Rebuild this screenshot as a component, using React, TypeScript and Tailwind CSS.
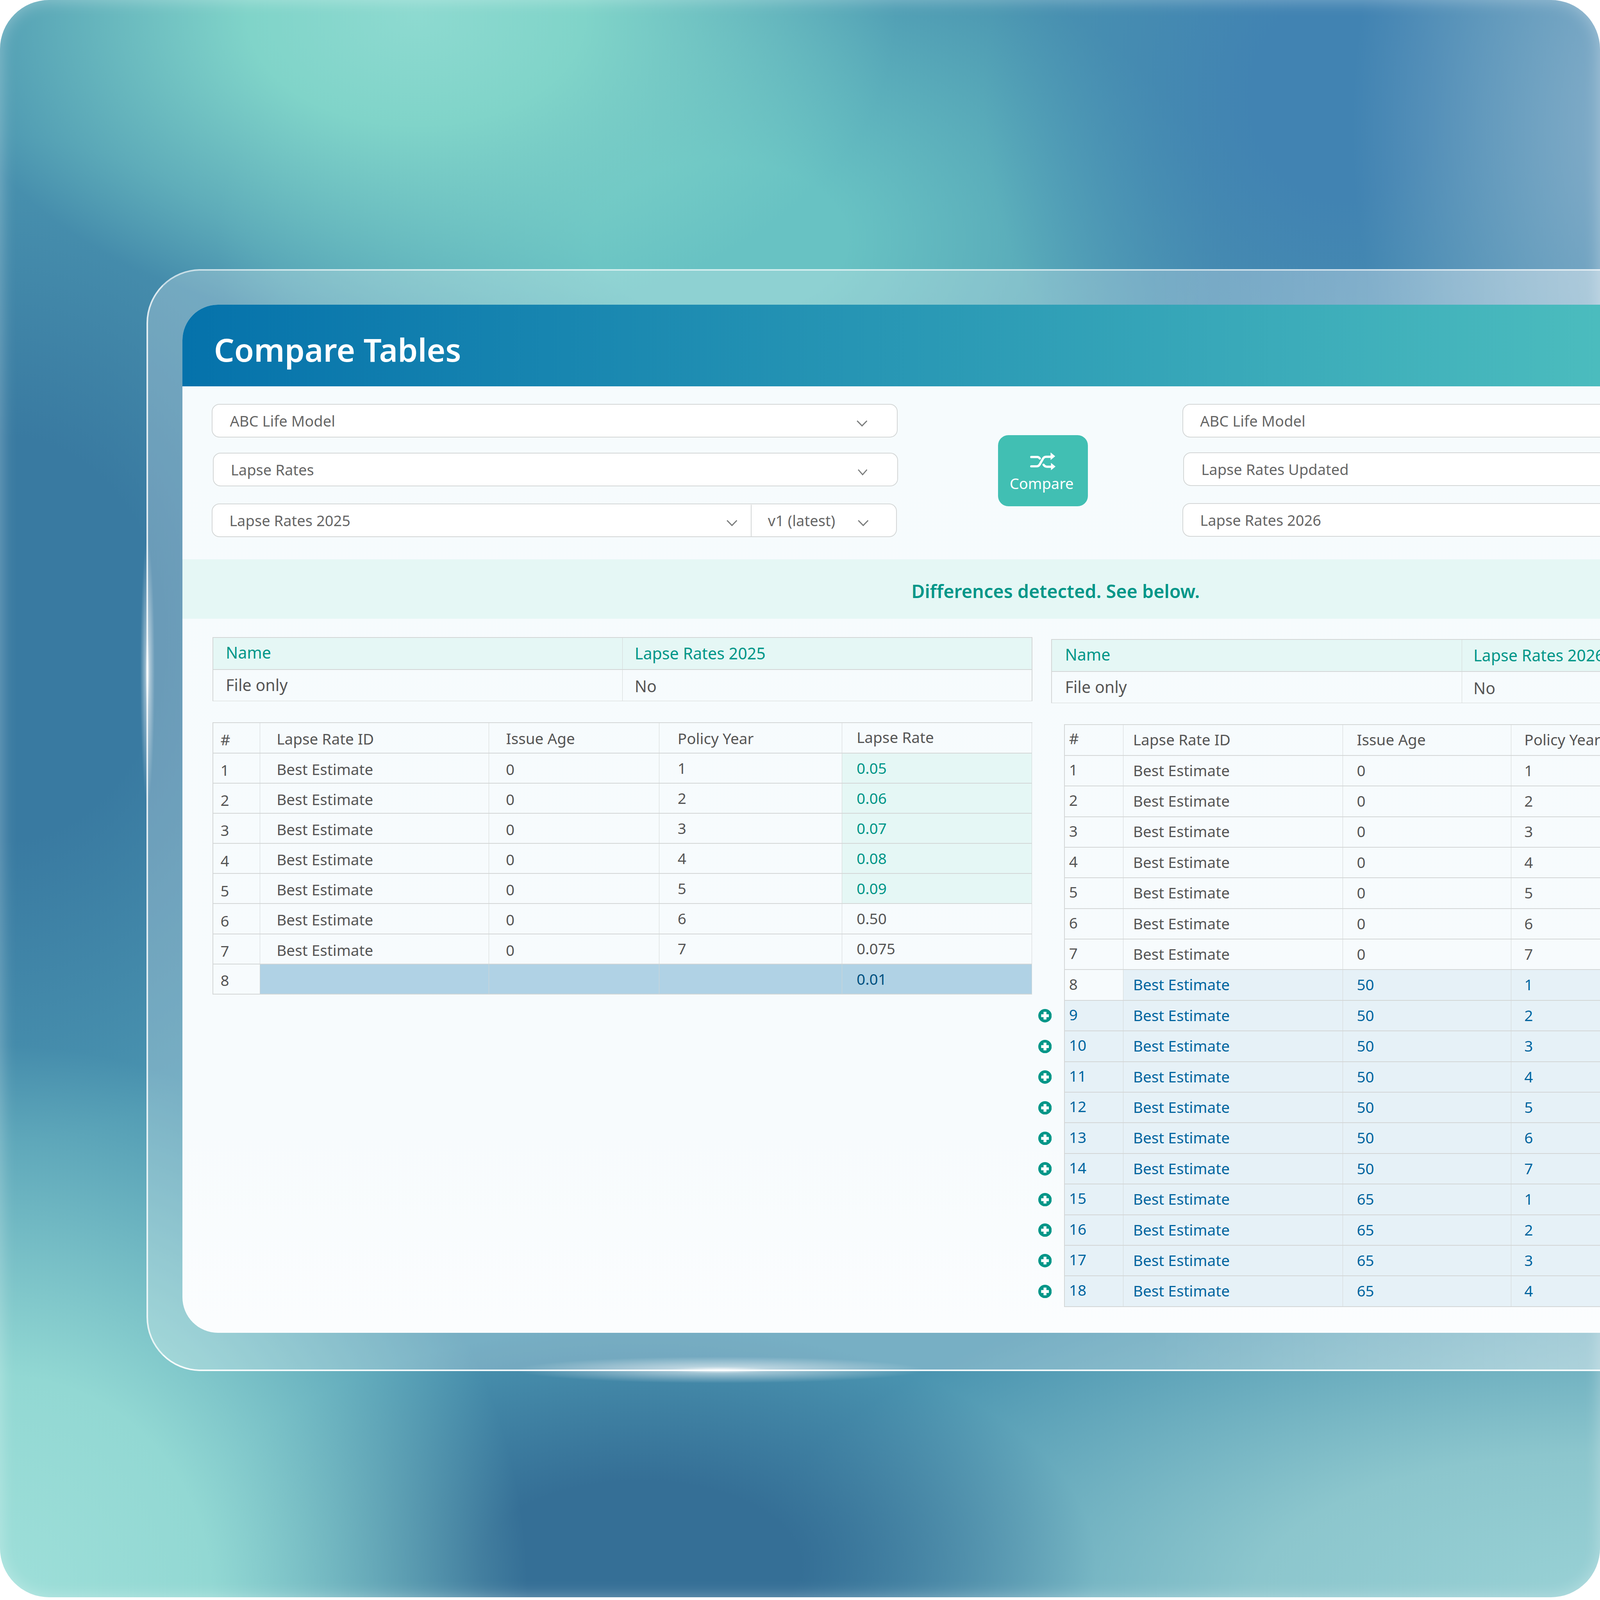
import { Fragment } from "react";

const LINE = "border-[#d3d6d6]";

function Chevron({ className }: { className: string }) {
  return (
    <svg className={className} viewBox="0 0 45 26" preserveAspectRatio="none" fill="none">
      <path d="M2 2 L22.5 23 L43 2" stroke="#7b7d7d" strokeWidth="5" />
    </svg>
  );
}

function ShuffleIcon() {
  return (
    <svg className="h-[78px] w-[106px]" viewBox="0 0 320 232" fill="none">
      <g stroke="#fff" strokeWidth="28" strokeLinecap="round" strokeLinejoin="round">
        <path d="M15 62 H90 Q110 62 122 80" />
        <path d="M15 179 H85 Q105 179 120 157 L160 87 Q175 59 200 59 H265" />
        <path d="M170 159 Q185 184 215 184 H270" />
      </g>
      <path d="M258 4 L316 52 L258 100 Z" fill="#fff" />
      <path d="M263 136 L320 182 L263 228 Z" fill="#fff" />
    </svg>
  );
}

function PlusBadge() {
  return (
    <svg className="absolute left-[-111px] top-[35px] h-[56px] w-[56px]" viewBox="0 0 56 56">
      <circle cx="28" cy="28" r="28" fill="#009688" />
      <path d="M22 12 H34 V22 H44 V34 H34 V44 H22 V34 H12 V22 H22 Z" fill="#fff" />
    </svg>
  );
}

function Select({ label, className }: { label: string; className: string }) {
  return (
    <div className={`flex h-[140px] items-center rounded-[32px] border-[4px] ${LINE} bg-white pt-[2px] text-[62px] text-[#666] ${className}`}>
      <span>{label}</span>
    </div>
  );
}

function InfoTable({ value, cols, first, second }: { value: string; cols: string; first: string; second: string }) {
  return (
    <div className={`grid w-full border-[4px] border-b-[3px] ${LINE} text-[67px] ${cols}`}>
      <div className={`flex h-[133px] items-center border-b-[4px] border-r-[3px] ${LINE} bg-[#e5f7f5] pb-[8px] text-[#009688] ${first}`}>Name</div>
      <div className={`flex h-[133px] items-center border-b-[4px] ${LINE} bg-[#e5f7f5] text-[#009688] ${second}`}>{value}</div>
      <div className={`flex h-[129px] items-center border-r-[3px] ${LINE} pb-[2px] text-[#555] ${first}`}>File only</div>
      <div className={`flex h-[129px] items-center pt-[6px] text-[#555] ${second}`}>No</div>
    </div>
  );
}

const leftRates = ["0.05", "0.06", "0.07", "0.08", "0.09", "0.50", "0.075"];

const rightRows = [
  ...[1, 2, 3, 4, 5, 6, 7].map((y) => ({ age: "0", year: y })),
  ...[1, 2, 3, 4, 5, 6, 7].map((y) => ({ age: "50", year: y })),
  ...[1, 2, 3, 4].map((y) => ({ age: "65", year: y })),
];

const cell = `flex items-center border-b-[4px] border-r-[3px] ${LINE}`;

function LeftTable() {
  return (
    <div className={`mt-[88px] grid auto-rows-[125.6px] grid-cols-[196px_953px_710px_762px_791px] border-l-[4px] border-t-[4px] ${LINE} text-[63px] text-[#555]`}>
      <div className={`${cell} pl-[30px] pt-[14px]`}>#</div>
      <div className={`${cell} pl-[68px] pt-[8px]`}>Lapse Rate ID</div>
      <div className={`${cell} pl-[71px] pt-[4px]`}>Issue Age</div>
      <div className={`${cell} pl-[76px] pt-[4px]`}>Policy Year</div>
      <div className={`${cell} pl-[60px] pb-[6px]`}>Lapse Rate</div>
      {leftRates.map((rate, i) => (
        <Fragment key={rate}>
          <div className={`${cell} pl-[30px] pt-[16px]`}>{i + 1}</div>
          <div className={`${cell} pl-[68px] pt-[8px]`}>Best Estimate</div>
          <div className={`${cell} pl-[70px] pt-[8px]`}>0</div>
          <div className={`${cell} pl-[76px] pb-[2px]`}>{i + 1}</div>
          {i < 5 ? (
            <div className={`${cell} bg-[#e5f7f5] pl-[60px] pb-[2px] text-[#009688]`}>{rate}</div>
          ) : (
            <div className={`${cell} pl-[60px] pb-[2px]`}>{rate}</div>
          )}
        </Fragment>
      ))}
      <div className={`${cell} pl-[30px] pt-[8px]`}>8</div>
      <div className={`${cell} bg-[#b0d2e5]`} />
      <div className={`${cell} bg-[#b0d2e5]`} />
      <div className={`${cell} bg-[#b0d2e5]`} />
      <div className={`${cell} bg-[#b0d2e5] pl-[60px] pb-[2px] text-[#00517f]`}>0.01</div>
    </div>
  );
}

function RightTable() {
  return (
    <div className={`ml-[54px] mt-[88px] grid w-[2800px] auto-rows-[127.6px] grid-cols-[245px_915px_701px_1fr] border-l-[4px] border-t-[4px] ${LINE} text-[63px] text-[#555]`}>
      <div className={`${cell} pl-[18px] pb-[14px]`}>#</div>
      <div className={`${cell} pl-[40px] pb-[4px]`}>Lapse Rate ID</div>
      <div className={`${cell} pl-[57px] pb-[4px]`}>Issue Age</div>
      <div className={`${cell} pl-[54px] pb-[4px]`}>Policy Year</div>
      {rightRows.map((row, i) => {
        const n = i + 1;
        const tint = n >= 8 ? "bg-[#e6f1f7] text-[#00659f]" : "";
        return (
          <Fragment key={n}>
            <div className={`${cell} relative pl-[18px] pb-[10px] ${n >= 9 ? tint : ""}`}>
              {n >= 9 && <PlusBadge />}
              {n}
            </div>
            <div className={`${cell} pl-[40px] pb-[4px] ${tint}`}>Best Estimate</div>
            <div className={`${cell} pl-[57px] pb-[4px] ${tint}`}>{row.age}</div>
            <div className={`${cell} pl-[54px] pb-[4px] ${tint}`}>{row.year}</div>
          </Fragment>
        );
      })}
    </div>
  );
}

export default function App() {
  // sizes below are in reference pixels (6667 wide); the browser window can be smaller
  const fit = window.innerWidth / 6667;

  return (
    <div style={{ zoom: fit }}>
      <div className="relative h-[6655px] w-[6667px] overflow-hidden rounded-[205px] bg-[#4a94b0] bg-[radial-gradient(ellipse_2000px_1300px_at_26%_1%,#8ddad0_0%,#80d4c9_35%,#8ddad000_100%),radial-gradient(ellipse_1300px_2000px_at_104%_8%,#7ca9c6_0%,#7ca9c6_25%,#7ca9c600_100%),radial-gradient(ellipse_1500px_1700px_at_84%_6%,#4183b2_0%,#4183b2_25%,#4183b200_100%),radial-gradient(ellipse_2100px_1300px_at_45%_15%,#68c2c3_0%,#68c2c3_25%,#68c2c300_100%),radial-gradient(ellipse_2200px_2300px_at_0%_100%,#9edfd9_0%,#92d8d3_40%,#9edfd900_100%),radial-gradient(ellipse_1900px_1000px_at_40%_98%,#356f96_0%,#356f96_35%,#356f9600_100%),radial-gradient(ellipse_3600px_1500px_at_100%_100%,#98d1d5_0%,#8cc6cd_40%,#98d1d500_100%),radial-gradient(ellipse_1700px_2100px_at_0%_40%,#397aa1_0%,#397aa1_40%,#397aa100_100%)] pl-[611px] pt-[1122px] font-['Noto_Sans',sans-serif] shadow-[inset_0_0_70px_rgba(255,255,255,0.35)]">
        <div className="h-[4591px] w-[7600px] rounded-[225px] border-[8px] border-b-white/90 border-l-white/75 border-r-white/60 border-t-white/60 bg-[linear-gradient(90deg,rgba(255,255,255,0.25),rgba(255,255,255,0.25)_55%,rgba(255,255,255,0.42)_80%)] pl-[142px] pt-[141px]">
          <div className="h-[4284px] w-[7278px] overflow-hidden rounded-[148px] bg-[linear-gradient(180deg,#f6fbfd,#f7fbfd_80%,#fbfdfe)]">
            <div className="flex h-[340px] items-center bg-[linear-gradient(90deg,#0572ab_0px,#4bbcbe_5906px)] pl-[132px] pt-[36px] text-[133px] font-semibold text-white">
              Compare Tables
            </div>

            <div className="flex h-[721px] pt-[74px]">
              <div className="ml-[123px] flex w-[2858px] flex-col">
                <Select label="ABC Life Model" className="pl-[72px]" />
                <div className="mt-[63px] ml-[4px] w-[2856px]">
                  <Select label="Lapse Rates" className="pl-[72px]" />
                </div>
                <div className={`mt-[71px] flex h-[140px] w-[2855px] rounded-[32px] border-[4px] ${LINE} bg-white pt-[2px] text-[62px] text-[#666]`}>
                  <div className={`flex w-[2246px] items-center border-r-[4px] ${LINE} pl-[70px]`}>Lapse Rates 2025</div>
                  <div className="flex items-center pl-[68px]">v1 (latest)</div>
                </div>
              </div>

              <button className="ml-[418px] mt-[129px] flex h-[297px] w-[374px] flex-col items-center rounded-[43px] bg-[#41bfb3] pt-[70px] text-[62px] leading-[84px] text-white">
                <ShuffleIcon />
                <span className="mr-[10px] mt-[12px]">Compare</span>
              </button>

              <div className="ml-[395px] flex w-[2000px] flex-col">
                <Select label="ABC Life Model" className="pl-[70px]" />
                <div className="mt-[62px] ml-[3px]">
                  <Select label="Lapse Rates Updated" className="pl-[72px]" />
                </div>
                <div className="mt-[71px]">
                  <Select label="Lapse Rates 2026" className="pl-[70px]" />
                </div>
              </div>
            </div>

            <div className="flex h-[247px] items-center justify-center bg-[#e5f7f5] pt-[16px] text-[76px] font-semibold text-[#009688]">
              Differences detected. See below.
            </div>

            <div className="flex pl-[126px] pt-[78px]">
              <div className="w-[3416px]">
                <InfoTable
                  value="Lapse Rates 2025"
                  cols="grid-cols-[1706px_1fr]"
                  first="pl-[52px]"
                  second="pl-[50px]"
                />
                <LeftTable />
              </div>
              <div className="ml-[78px] mt-[8px] w-[2900px]">
                <InfoTable
                  value="Lapse Rates 2026"
                  cols="grid-cols-[1709px_1fr]"
                  first="pl-[55px]"
                  second="pl-[48px]"
                />
                <RightTable />
              </div>
            </div>
          </div>
        </div>

        {/* chevrons and edge glows sit over the panels */}
        <Chevron className="absolute left-[3569px] top-[1752px] h-[26px] w-[45px]" />
        <Chevron className="absolute left-[3574px] top-[1955px] h-[26px] w-[40px]" />
        <Chevron className="absolute left-[3027px] top-[2167px] h-[26px] w-[45px]" />
        <Chevron className="absolute left-[3574px] top-[2167px] h-[26px] w-[45px]" />
        <div className="pointer-events-none absolute left-[2150px] top-[5653px] h-[110px] w-[1700px] bg-[radial-gradient(ellipse_closest-side,rgba(255,255,255,0.95)_0%,rgba(255,255,255,0.5)_25%,rgba(255,255,255,0)_100%)]" />
        <div className="pointer-events-none absolute left-[585px] top-[2250px] h-[1100px] w-[60px] bg-[radial-gradient(ellipse_closest-side,rgba(255,255,255,0.95)_0%,rgba(255,255,255,0.45)_30%,rgba(255,255,255,0)_100%)]" />
      </div>
    </div>
  );
}
